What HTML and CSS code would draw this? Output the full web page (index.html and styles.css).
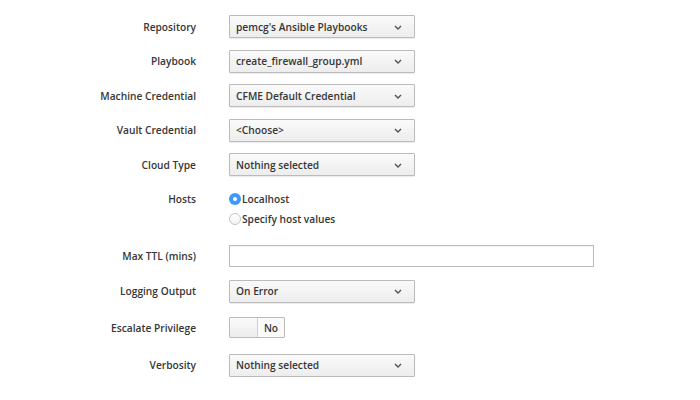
FILE: index.html
```html
<!DOCTYPE html>
<html>
<head>
<meta charset="utf-8">
<link rel="stylesheet" href="styles.css">
</head>
<body>
<form class="form">
  <div class="row r-sel">
    <label class="lbl">Repository</label>
    <div class="select"><span>pemcg's Ansible Playbooks</span><svg class="caret" width="8" height="5" viewBox="0 0 8 5"><path d="M1 1 L4 4 L7 1" fill="none" stroke="#4d5258" stroke-width="1.4"/></svg></div>
  </div>
  <div class="row r-sel">
    <label class="lbl">Playbook</label>
    <div class="select"><span>create_firewall_group.yml</span><svg class="caret" width="8" height="5" viewBox="0 0 8 5"><path d="M1 1 L4 4 L7 1" fill="none" stroke="#4d5258" stroke-width="1.4"/></svg></div>
  </div>
  <div class="row r-sel">
    <label class="lbl">Machine Credential</label>
    <div class="select"><span>CFME Default Credential</span><svg class="caret" width="8" height="5" viewBox="0 0 8 5"><path d="M1 1 L4 4 L7 1" fill="none" stroke="#4d5258" stroke-width="1.4"/></svg></div>
  </div>
  <div class="row r-sel">
    <label class="lbl">Vault Credential</label>
    <div class="select"><span>&lt;Choose&gt;</span><svg class="caret" width="8" height="5" viewBox="0 0 8 5"><path d="M1 1 L4 4 L7 1" fill="none" stroke="#4d5258" stroke-width="1.4"/></svg></div>
  </div>
  <div class="row r-cloud">
    <label class="lbl">Cloud Type</label>
    <div class="select"><span>Nothing selected</span><svg class="caret" width="8" height="5" viewBox="0 0 8 5"><path d="M1 1 L4 4 L7 1" fill="none" stroke="#4d5258" stroke-width="1.4"/></svg></div>
  </div>
  <div class="row r-hosts">
    <label class="lbl lbl-top">Hosts</label>
    <div class="radios">
      <div class="radio"><span class="dot checked"></span><span>Localhost</span></div>
      <div class="radio"><span class="dot"></span><span>Specify host values</span></div>
    </div>
  </div>
  <div class="row r-ttl">
    <label class="lbl">Max TTL (mins)</label>
    <div class="input"></div>
  </div>
  <div class="row r-log">
    <label class="lbl">Logging Output</label>
    <div class="select"><span>On Error</span><svg class="caret" width="8" height="5" viewBox="0 0 8 5"><path d="M1 1 L4 4 L7 1" fill="none" stroke="#4d5258" stroke-width="1.4"/></svg></div>
  </div>
  <div class="row r-esc">
    <label class="lbl">Escalate Privilege</label>
    <div class="switch"><span class="handle"></span><span class="off">No</span></div>
  </div>
  <div class="row">
    <label class="lbl">Verbosity</label>
    <div class="select"><span>Nothing selected</span><svg class="caret" width="8" height="5" viewBox="0 0 8 5"><path d="M1 1 L4 4 L7 1" fill="none" stroke="#4d5258" stroke-width="1.4"/></svg></div>
  </div>
</form>
</body>
</html>
```
FILE: styles.css
```css
html, body {
  margin: 0;
  padding: 0;
  background: #fff;
}
body {
  font-family: "Open Sans", "Liberation Sans", sans-serif;
  font-size: 10.2px;
  font-weight: 600;
  color: #363636;
}
.form {
  padding-top: 15px;
  display: flex;
  flex-direction: column;
}
.row {
  display: flex;
  align-items: center;
}
.r-sel { margin-bottom: 11.5px; }
.r-cloud { margin-bottom: 13px; }
.r-hosts { margin-bottom: 16px; align-items: flex-start; }
.r-ttl { margin-bottom: 12.5px; }
.r-log { margin-bottom: 14.5px; }
.r-esc { margin-bottom: 15.5px; }
.lbl {
  width: 196px;
  margin-right: 33px;
  text-align: right;
  line-height: 20px;
  flex: none;
}
.select {
  box-sizing: border-box;
  width: 186px;
  height: 23px;
  border: 1px solid #bbb;
  border-radius: 1px;
  background: linear-gradient(to bottom, #fafafa 0%, #ededed 100%);
  box-shadow: 0 1px 1px rgba(3,3,3,0.08);
  display: flex;
  align-items: center;
  justify-content: space-between;
  padding: 0 12px 0 6px;
  color: #363636;
}
.caret { display: block; margin-top: 1px; }
.radios {
  display: flex;
  flex-direction: column;
}
.radio {
  display: flex;
  align-items: center;
  height: 20px;
  gap: 1px;
}
.dot {
  box-sizing: border-box;
  width: 12px;
  height: 12px;
  border-radius: 50%;
  border: 1px solid #c4c4c4;
  background: linear-gradient(to bottom, #fff, #f3f3f3);
  position: relative;
  flex: none;
}
.dot.checked {
  border: none;
  background: #3b99fc;
}
.dot.checked::after {
  content: "";
  position: absolute;
  left: 4px;
  top: 4px;
  width: 4px;
  height: 4px;
  border-radius: 50%;
  background: #fff;
}
.input {
  box-sizing: border-box;
  width: 365px;
  height: 22px;
  border: 1px solid #bbb;
  background: #fff;
  box-shadow: inset 0 1px 1px rgba(3,3,3,0.05);
}
.switch {
  box-sizing: border-box;
  width: 56px;
  height: 21px;
  border: 1px solid #bbb;
  border-radius: 1px;
  display: flex;
  background: #fff;
}
.handle {
  width: 27px;
  border-right: 1px solid #d1d1d1;
  background: linear-gradient(to bottom, #fafafa 0%, #ededed 100%);
}
.off {
  flex: 1;
  display: flex;
  align-items: center;
  justify-content: center;
  background: #fafafa;
  color: #363636;
}
```
